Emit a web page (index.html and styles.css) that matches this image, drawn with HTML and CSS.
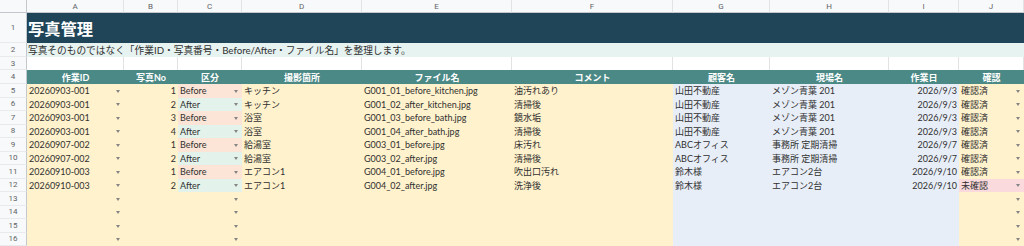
FILE: index.html
```html
<!DOCTYPE html>
<html lang="ja">
<head>
<meta charset="utf-8">
<title>写真管理</title>
<link rel="stylesheet" href="styles.css">
</head>
<body>
<div class="sheet">
  <div class="ch corner"></div>
  <div class="ch">A</div><div class="ch">B</div><div class="ch">C</div><div class="ch">D</div><div class="ch">E</div>
  <div class="ch">F</div><div class="ch">G</div><div class="ch">H</div><div class="ch">I</div><div class="ch">J</div>

  <div class="rh">1</div>
  <div class="title">写真管理</div>

  <div class="rh">2</div>
  <div class="desc">写真そのものではなく「作業ID・写真番号・Before/After・ファイル名」を整理します。</div>

  <div class="rh">3</div>
  <div class="blank"></div><div class="blank"></div><div class="blank"></div><div class="blank"></div><div class="blank"></div>
  <div class="blank"></div><div class="blank"></div><div class="blank"></div><div class="blank"></div><div class="blank"></div>

  <div class="rh">4</div>
  <div class="hd">作業ID</div><div class="hd">写真No</div><div class="hd">区分</div><div class="hd">撮影箇所</div><div class="hd">ファイル名</div>
  <div class="hd">コメント</div><div class="hd">顧客名</div><div class="hd">現場名</div><div class="hd">作業日</div><div class="hd">確認</div>

  <div class="rh">5</div>
  <div class="c y dd">20260903-001</div><div class="c y num">1</div><div class="c bf dd">Before</div><div class="c y">キッチン</div><div class="c y">G001_01_before_kitchen.jpg</div>
  <div class="c y">油汚れあり</div><div class="c b">山田不動産</div><div class="c b">メゾン青葉 201</div><div class="c b num">2026/9/3</div><div class="c y dd">確認済</div>

  <div class="rh">6</div>
  <div class="c y dd">20260903-001</div><div class="c y num">2</div><div class="c af dd">After</div><div class="c y">キッチン</div><div class="c y">G001_02_after_kitchen.jpg</div>
  <div class="c y">清掃後</div><div class="c b">山田不動産</div><div class="c b">メゾン青葉 201</div><div class="c b num">2026/9/3</div><div class="c y dd">確認済</div>

  <div class="rh">7</div>
  <div class="c y dd">20260903-001</div><div class="c y num">3</div><div class="c bf dd">Before</div><div class="c y">浴室</div><div class="c y">G001_03_before_bath.jpg</div>
  <div class="c y">鏡水垢</div><div class="c b">山田不動産</div><div class="c b">メゾン青葉 201</div><div class="c b num">2026/9/3</div><div class="c y dd">確認済</div>

  <div class="rh">8</div>
  <div class="c y dd">20260903-001</div><div class="c y num">4</div><div class="c af dd">After</div><div class="c y">浴室</div><div class="c y">G001_04_after_bath.jpg</div>
  <div class="c y">清掃後</div><div class="c b">山田不動産</div><div class="c b">メゾン青葉 201</div><div class="c b num">2026/9/3</div><div class="c y dd">確認済</div>

  <div class="rh">9</div>
  <div class="c y dd">20260907-002</div><div class="c y num">1</div><div class="c bf dd">Before</div><div class="c y">給湯室</div><div class="c y">G003_01_before.jpg</div>
  <div class="c y">床汚れ</div><div class="c b">ABCオフィス</div><div class="c b">事務所 定期清掃</div><div class="c b num">2026/9/7</div><div class="c y dd">確認済</div>

  <div class="rh">10</div>
  <div class="c y dd">20260907-002</div><div class="c y num">2</div><div class="c af dd">After</div><div class="c y">給湯室</div><div class="c y">G003_02_after.jpg</div>
  <div class="c y">清掃後</div><div class="c b">ABCオフィス</div><div class="c b">事務所 定期清掃</div><div class="c b num">2026/9/7</div><div class="c y dd">確認済</div>

  <div class="rh">11</div>
  <div class="c y dd">20260910-003</div><div class="c y num">1</div><div class="c bf dd">Before</div><div class="c y">エアコン1</div><div class="c y">G004_01_before.jpg</div>
  <div class="c y">吹出口汚れ</div><div class="c b">鈴木様</div><div class="c b">エアコン2台</div><div class="c b num">2026/9/10</div><div class="c y dd">確認済</div>

  <div class="rh">12</div>
  <div class="c y dd">20260910-003</div><div class="c y num">2</div><div class="c af dd">After</div><div class="c y">エアコン1</div><div class="c y">G004_02_after.jpg</div>
  <div class="c y">洗浄後</div><div class="c b">鈴木様</div><div class="c b">エアコン2台</div><div class="c b num">2026/9/10</div><div class="c pk dd">未確認</div>

  <div class="rh">13</div>
  <div class="c y dd"></div><div class="c y"></div><div class="c y dd"></div><div class="c y"></div><div class="c y"></div>
  <div class="c y"></div><div class="c b"></div><div class="c b"></div><div class="c b"></div><div class="c y dd"></div>

  <div class="rh">14</div>
  <div class="c y dd"></div><div class="c y"></div><div class="c y dd"></div><div class="c y"></div><div class="c y"></div>
  <div class="c y"></div><div class="c b"></div><div class="c b"></div><div class="c b"></div><div class="c y dd"></div>

  <div class="rh">15</div>
  <div class="c y dd"></div><div class="c y"></div><div class="c y dd"></div><div class="c y"></div><div class="c y"></div>
  <div class="c y"></div><div class="c b"></div><div class="c b"></div><div class="c b"></div><div class="c y dd"></div>

  <div class="rh">16</div>
  <div class="c y dd"></div><div class="c y"></div><div class="c y dd"></div><div class="c y"></div><div class="c y"></div>
  <div class="c y"></div><div class="c b"></div><div class="c b"></div><div class="c b"></div><div class="c y dd"></div>
</div>
</body>
</html>
```

FILE: styles.css
```css
html, body {
  margin: 0;
  padding: 0;
  background: #ffffff;
}

.sheet {
  display: grid;
  grid-template-columns: 27px 97px 54px 64px 120px 150px 161px 97px 119px 70px 65px;
  grid-template-rows: 13px 30px 14px 13px 14px repeat(12, 13.5px);
  width: 1024px;
  height: 246px;
  overflow: hidden;
  font-family: Lato, "Noto Sans CJK JP", sans-serif;
  font-size: 9px;
  color: #303030;
}

.sheet > div {
  box-sizing: border-box;
  white-space: nowrap;
  overflow: hidden;
  display: flex;
  align-items: center;
  min-width: 0;
}

.ch {
  background: #f8f9fa;
  color: #5f6368;
  font-family: Roboto, "Noto Sans", sans-serif;
  font-size: 8px;
  justify-content: center;
  border-right: 1px solid #e1e3e6;
  border-bottom: 1px solid #c4c7cb;
}

.corner {
  border-right: 1px solid #c4c7cb;
}

.rh {
  background: #f8f9fa;
  color: #5f6368;
  font-family: Roboto, "Noto Sans", sans-serif;
  font-size: 8px;
  justify-content: center;
  border-right: 1px solid #c4c7cb;
  border-bottom: 1px solid #e8eaed;
}

.title {
  grid-column: 2 / span 10;
  background: #204558;
  color: #ffffff;
  font-family: "Noto Sans CJK JP", sans-serif;
  font-weight: 700;
  font-size: 16.3px;
  padding-left: 1px;
}

.desc {
  grid-column: 2 / span 10;
  background: #e7f3f0;
  font-size: 9.7px;
  padding-left: 1px;
}

.blank {
  background: #ffffff;
  border-right: 1px solid #e2e2e2;
}

.hd {
  background: #4a8985;
  color: #ffffff;
  font-weight: 700;
  justify-content: center;
}

.c {
  padding: 0 2px;
  position: relative;
}

.num {
  justify-content: flex-end;
}

.y { background: #fff2cc; }
.b { background: #e8eef7; }
.bf { background: #fce5d6; }
.af { background: #e3f2ea; }
.pk { background: #fadadd; }

.dd::after {
  content: "";
  position: absolute;
  right: 4px;
  top: 50%;
  margin-top: -1px;
  width: 0;
  height: 0;
  border-left: 2.5px solid transparent;
  border-right: 2.5px solid transparent;
  border-top: 3px solid #858585;
}
```
